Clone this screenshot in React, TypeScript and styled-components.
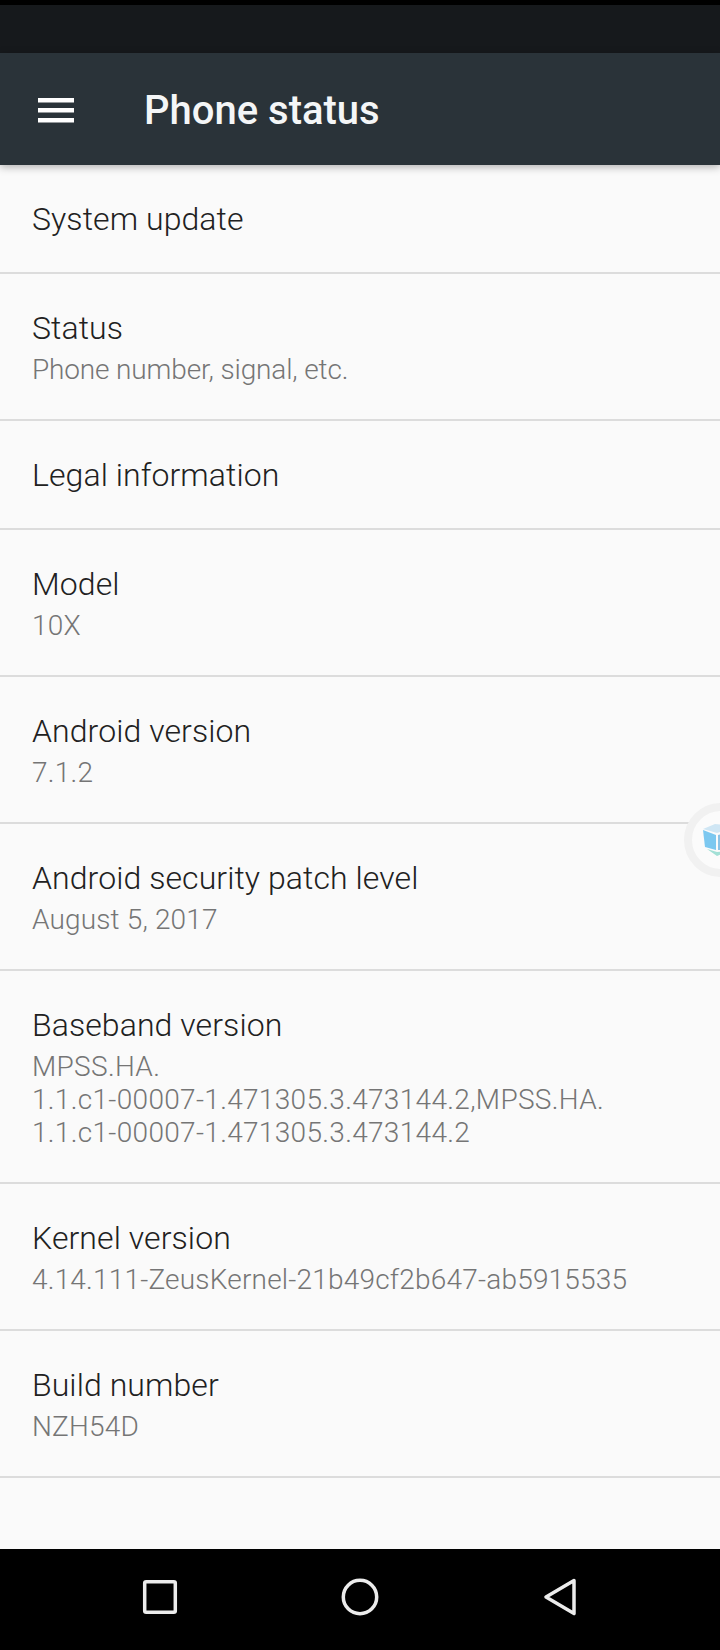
import React from "react";
import styled, { createGlobalStyle } from "styled-components";

const Global = createGlobalStyle`
  html, body { margin: 0; padding: 0; background: #fafafa; }
  #root { width: 720px; height: 1650px; }
`;

const Screen = styled.div`
  position: relative;
  width: 720px;
  height: 1650px;
  overflow: hidden;
  display: flex;
  flex-direction: column;
  background: #fafafa;
  font-family: Roboto, "Liberation Sans", sans-serif;
`;

const StatusBar = styled.div`
  height: 48px;
  flex: none;
  border-top: 5px solid #000;
  background: #16191c;
`;

const Toolbar = styled.header`
  position: relative;
  z-index: 1;
  height: 112px;
  box-sizing: border-box;
  padding-top: 3px;
  flex: none;
  display: flex;
  align-items: center;
  background: #2a3339;
  box-shadow: 0 2px 8px rgba(0, 0, 0, 0.3);
`;

const Burger = styled.svg`
  width: 36px;
  height: 26px;
  margin-left: 38px;
  margin-right: 70px;
  flex: none;
`;

const Title = styled.h1`
  margin: 0;
  font-size: 40px;
  font-weight: 500;
  color: #f4f6f7;
  line-height: 48px;
`;

const List = styled.main`
  flex: 1;
  min-height: 0;
`;

const Row = styled.div`
  padding: 34px 32px 33px;
  border-bottom: 2px solid #dcdcdc;
`;

const ItemTitle = styled.div`
  font-size: 32px;
  font-weight: 300;
  line-height: 40px;
  letter-spacing: 0.08px;
  color: #212121;
`;

const ItemSummary = styled.div<{ $tracking: number }>`
  font-size: 28px;
  font-weight: 300;
  line-height: 33px;
  margin-top: 4.5px;
  margin-bottom: 0.5px;
  letter-spacing: ${(p) => p.$tracking}px;
  color: #757575;
  white-space: pre-line;
`;

const NavBar = styled.nav`
  height: 101px;
  flex: none;
  display: flex;
  align-items: center;
  justify-content: center;
  background: #000;
`;

const NavSlot = styled.div`
  width: 200px;
  display: flex;
  justify-content: center;
  margin-top: -6px;
`;

const NavIcon = styled.svg`
  width: 40px;
  height: 40px;
  fill: none;
  stroke: #ececec;
  stroke-width: 3.5;
  stroke-linejoin: round;
`;

const Floater = styled.div`
  position: absolute;
  left: 684px;
  top: 803px;
  width: 58px;
  height: 58px;
  border-radius: 50%;
  background: #fbfbfb;
  border: 8px solid #f1f1f1;
  overflow: hidden;
`;

const Cube = styled.svg`
  position: absolute;
  left: 11px;
  top: 13px;
  width: 36px;
  height: 32px;
`;

const items: { title: string; summary?: string; tracking?: number }[] = [
  { title: "System update" },
  { title: "Status", summary: "Phone number, signal, etc.", tracking: -0.15 },
  { title: "Legal information" },
  { title: "Model", summary: "10X", tracking: 0.2 },
  { title: "Android version", summary: "7.1.2", tracking: 0.25 },
  { title: "Android security patch level", summary: "August 5, 2017", tracking: 0.15 },
  {
    title: "Baseband version",
    summary:
      "MPSS.HA.\n1.1.c1-00007-1.471305.3.473144.2,MPSS.HA.\n1.1.c1-00007-1.471305.3.473144.2",
    tracking: 0.32,
  },
  {
    title: "Kernel version",
    summary: "4.14.111-ZeusKernel-21b49cf2b647-ab5915535",
    tracking: 0.2,
  },
  { title: "Build number", summary: "NZH54D", tracking: 0.2 },
];

export default function App() {
  return (
    <Screen>
      <Global />
      <StatusBar />
      <Toolbar>
        <Burger viewBox="0 0 36 26">
          <rect x="0" y="0" width="36" height="4.5" fill="#fff" />
          <rect x="0" y="10" width="36" height="4.5" fill="#fff" />
          <rect x="0" y="20" width="36" height="4.5" fill="#fff" />
        </Burger>
        <Title>Phone status</Title>
      </Toolbar>
      <List>
        {items.map((it) => (
          <Row key={it.title}>
            <ItemTitle>{it.title}</ItemTitle>
            {it.summary && <ItemSummary $tracking={it.tracking ?? 0}>{it.summary}</ItemSummary>}
          </Row>
        ))}
      </List>
      <NavBar>
        <NavSlot>
          <NavIcon viewBox="0 0 40 40">
            <rect x="4.7" y="4.7" width="30.6" height="30.6" rx="1.5" />
          </NavIcon>
        </NavSlot>
        <NavSlot>
          <NavIcon viewBox="0 0 40 40">
            <circle cx="20" cy="20" r="16.7" />
          </NavIcon>
        </NavSlot>
        <NavSlot>
          <NavIcon viewBox="0 0 40 40">
            <path d="M34 3.5 L6 20 L34 36.5 Z" />
          </NavIcon>
        </NavSlot>
      </NavBar>
      <Floater>
        <Cube viewBox="0 0 36 32">
          <path d="M0 5 L12 0 L36 2 L14 9 Z" fill="#cfe6f4" />
          <path d="M0 6 L13 11 L13 26 L2 23 Z" fill="#7cc8f0" />
          <path d="M15 11 L36 5 L36 26 L15 26 Z" fill="#8cc4e6" />
          <path d="M4 25 L14 28 L26 27 L14 32 Z" fill="#a3e0d6" />
        </Cube>
      </Floater>
    </Screen>
  );
}
